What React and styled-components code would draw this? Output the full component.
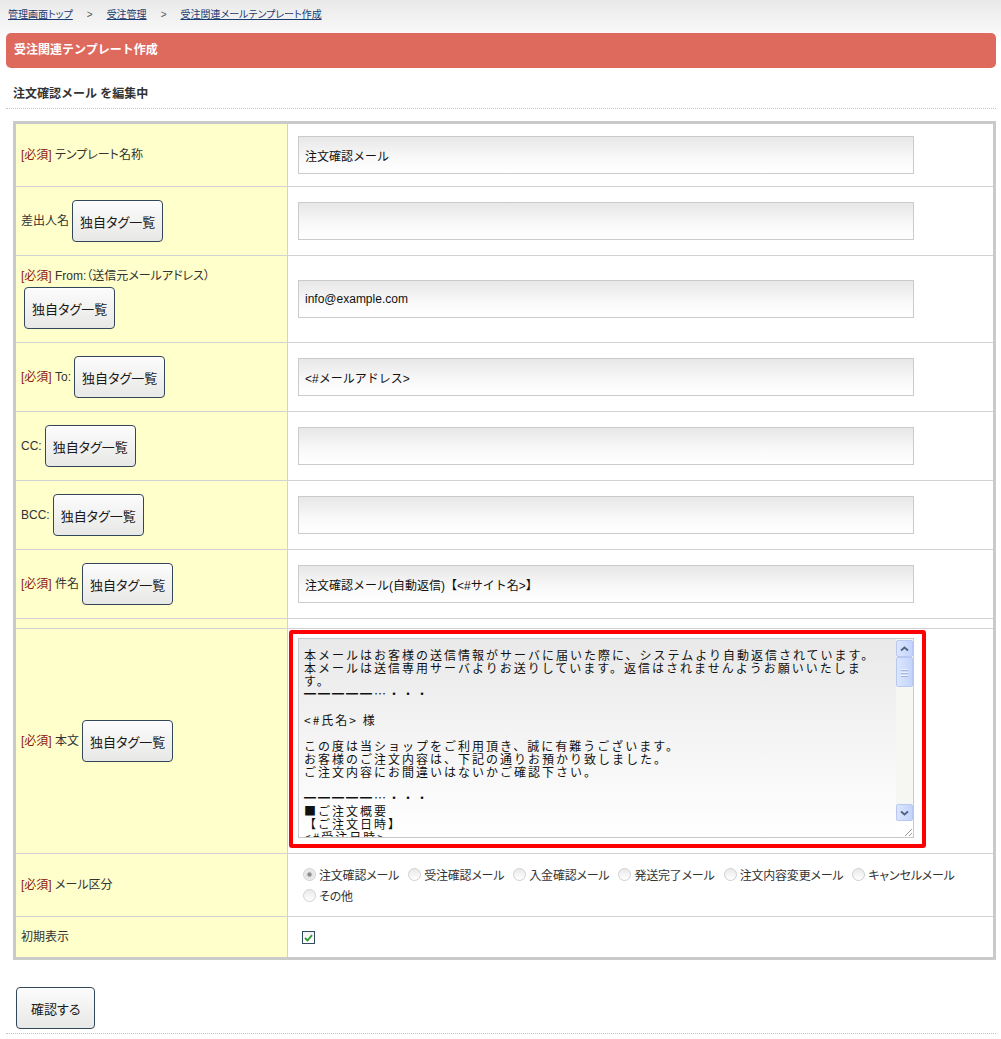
import React from "react";
import styled, { createGlobalStyle, css } from "styled-components";

const GlobalStyle = createGlobalStyle`
  html, body {
    margin: 0;
    padding: 0;
    background: #fff linear-gradient(#e9e9e9 0, #fff 46px) no-repeat;
    font-family: "Liberation Sans", "Noto Sans CJK JP", sans-serif;
    color: #333;
  }
`;

const Page = styled.div`
  width: 1001px;
  box-sizing: border-box;
  padding: 0 5px 0 6px;
`;

const Breadcrumb = styled.div`
  padding: 9px 2px 0;
  font-size: 10px;
  line-height: 12px;
  font-feature-settings: "palt" 1;
`;

const Crumb = styled.a`
  color: #1a3b70;
  text-decoration: underline;
`;

const Sep = styled.span`
  margin: 0 14px;
  color: #555;
`;

const TitleBar = styled.h1`
  margin: 12px 0 0;
  height: 35px;
  line-height: 35px;
  padding-left: 8px;
  background: #de6a5e;
  border-radius: 5px;
  color: #fff;
  font-size: 12px;
  font-weight: bold;
`;

const Subtitle = styled.h2`
  margin: 0;
  padding: 18px 7px 6px;
  font-size: 12px;
  line-height: 16px;
  font-weight: bold;
  color: #333;
  border-bottom: 1px dotted #c4c4c4;
`;

const FormTable = styled.table`
  margin: 12px 0 0 7px;
  width: calc(100% - 7px);
  table-layout: fixed;
  border-collapse: separate;
  border-spacing: 0;
  border: 3px solid #cacaca;
  font-size: 12px;

  tr:last-child > * {
    border-bottom: 0;
  }
`;

const LabelCell = styled.th`
  width: 272px;
  box-sizing: border-box;
  padding: ${(p) => (p.$spacer ? "0" : "12px 5px")};
  height: ${(p) => (p.$spacer ? "9px" : "auto")};
  background: #ffffcc;
  border-right: 1px solid #d2d2d2;
  border-bottom: 1px solid #d2d2d2;
  text-align: left;
  vertical-align: middle;
  font-weight: normal;
  font-size: 12px;
  line-height: 16px;
  color: #333;
  font-feature-settings: "palt" 1;
`;

const cellPads = {
  normal: "12px 10px",
  body: "1px 10px 5px 1px",
  radios: "10px 10px 10px",
  spacer: "0",
};

const ValueCell = styled.td`
  padding: ${(p) => cellPads[p.$variant || "normal"]};
  height: ${(p) => (p.$variant === "spacer" ? "9px" : "auto")};
  border-bottom: 1px solid #d2d2d2;
  vertical-align: middle;
  background: #fff;
  line-height: 16px;
`;

const LabelInner = styled.div`
  display: flex;
  align-items: ${(p) => (p.$stacked ? "flex-start" : "center")};
  flex-direction: ${(p) => (p.$stacked ? "column" : "row")};
  gap: ${(p) => (p.$stacked ? "2px" : "3px")};
`;

const LabelText = styled.span`
  white-space: nowrap;
`;

const Required = styled.span`
  color: #8e1a10;
`;

const buttonBase = css`
  height: 42px;
  box-sizing: border-box;
  border: 1px solid #33475a;
  border-radius: 4px;
  background: linear-gradient(#fcfcfc, #e8e8e6);
  box-shadow: inset 0 1px 0 #fff;
  font-family: "Noto Sans CJK JP", sans-serif;
  font-size: 13px;
  font-feature-settings: "palt" 1;
  color: #1a1a1a;
  cursor: pointer;
  flex-shrink: 0;
`;

const TagButton = styled.button`
  ${buttonBase};
  padding: 0 7px;
  margin: 1px 0 1px ${(p) => (p.$stacked ? "3px" : "0")};
`;

const SubmitButton = styled.button`
  ${buttonBase};
  padding: 0 14px;
`;

const TextInput = styled.input`
  display: block;
  width: 616px;
  height: 38px;
  box-sizing: border-box;
  padding: 0 6px;
  border: 1px solid #cbcbcb;
  background: linear-gradient(#e7e7e7 0%, #f9f9f9 60%, #fff 100%);
  font-family: "Liberation Sans", "Noto Sans CJK JP", sans-serif;
  font-size: 12px;
  color: #111;
  outline: none;
`;

const Highlight = styled.div`
  width: fit-content;
  border: 4px solid #f00;
  border-radius: 3px;
  padding: 4px 8px 6px 5px;
`;

const TextBox = styled.div`
  display: flex;
  width: 616px;
  height: 200px;
  box-sizing: border-box;
  border: 1px solid #c8c8c8;
  background: linear-gradient(#e9e9e9, #fff);
`;

const BodyText = styled.textarea`
  flex: 1;
  min-width: 0;
  height: 100%;
  box-sizing: border-box;
  margin: 0;
  padding: 9px 10px 0 5px;
  border: 0;
  background: transparent;
  resize: none;
  overflow: hidden;
  outline: none;
  font-family: "Noto Sans CJK JP", monospace;
  font-size: 12px;
  line-height: 13px;
  letter-spacing: 2px;
  color: #111;
`;

const ScrollBar = styled.div`
  width: 17px;
  display: flex;
  flex-direction: column;
  padding: 1px 0 0;
  background: #f6f6f2;
`;

const ScrollButton = styled.div`
  height: 17px;
  box-sizing: border-box;
  display: flex;
  align-items: center;
  justify-content: center;
  border: 1px solid #b7c8f2;
  border-radius: 2px;
  background: linear-gradient(90deg, #dce6fd, #c3d3fb);
`;

const ScrollThumb = styled(ScrollButton)`
  height: 30px;
  flex-direction: column;
  gap: 2px;
`;

const GripLine = styled.span`
  width: 7px;
  height: 1px;
  background: #eef3ff;
  box-shadow: 0 1px 0 #9fb4e6;
`;

const ScrollTrack = styled.div`
  flex: 1;
`;

const ResizeGrip = styled.div`
  height: 16px;
  background: #fff;
  display: flex;
  align-items: flex-end;
  justify-content: flex-end;
`;

const RadioGroup = styled.div`
  display: flex;
  flex-wrap: wrap;
`;

const RadioLabel = styled.label`
  display: inline-flex;
  align-items: center;
  height: 21px;
  margin-right: 4px;
  white-space: nowrap;
  font-family: "Noto Sans CJK JP", sans-serif;
  font-size: 12px;
  letter-spacing: -0.2px;
  color: #333;
  font-feature-settings: "palt" 1;
`;

const Radio = styled.input`
  appearance: none;
  flex-shrink: 0;
  width: 13px;
  height: 13px;
  margin: 0 3px 0 5px;
  border: 1px solid #d0d0d0;
  border-radius: 50%;
  background: linear-gradient(#e9e9e9, #fff);
  box-sizing: border-box;

  &:checked {
    background: radial-gradient(circle, #8c8c8c 0 1.6px, #e2e2e2 2.6px, #f8f8f8 100%);
  }
`;

const CheckBox = styled.span`
  display: inline-flex;
  align-items: center;
  justify-content: center;
  width: 13px;
  height: 13px;
  margin-left: 4px;
  box-sizing: border-box;
  border: 1px solid #2f4b5c;
  background: linear-gradient(#f2f2f2, #fff);
  vertical-align: middle;
`;

const Footer = styled.div`
  padding: 27px 0 4px 10px;
  border-bottom: 1px dotted #c4c4c4;
`;

const fields = [
  { required: true, label: "テンプレート名称", value: "注文確認メール" },
  { label: "差出人名", tag: true, value: "" },
  { required: true, label: "From:（送信元メールアドレス）", tag: true, stacked: true, value: "info@example.com" },
  { required: true, label: "To:", tag: true, value: "<#メールアドレス>" },
  { label: "CC:", tag: true, value: "" },
  { label: "BCC:", tag: true, value: "" },
  { required: true, label: "件名", tag: true, value: "注文確認メール(自動返信)【<#サイト名>】" },
];

const mailTypes = [
  "注文確認メール",
  "受注確認メール",
  "入金確認メール",
  "発送完了メール",
  "注文内容変更メール",
  "キャンセルメール",
  "その他",
];

const bodyText = `本メールはお客様の送信情報がサーバに届いた際に、システムより自動返信されています。
本メールは送信専用サーバよりお送りしています。返信はされませんようお願いいたします。
━━━━━…・・・

<#氏名> 様

この度は当ショップをご利用頂き、誠に有難うございます。
お客様のご注文内容は、下記の通りお預かり致しました。
ご注文内容にお間違いはないかご確認下さい。

━━━━━…・・・
■ご注文概要
【ご注文日時】
<#受注日時>
【ご注文番号】
<#受注番号>
`;

function Label({ required, text, tag, stacked }) {
  return (
    <LabelInner $stacked={stacked}>
      <LabelText>
        {required && <Required>[必須]</Required>} {text}
      </LabelText>
      {tag && (
        <TagButton type="button" $stacked={stacked}>
          独自タグ一覧
        </TagButton>
      )}
    </LabelInner>
  );
}

function Arrow({ down }) {
  return (
    <svg width="9" height="6" viewBox="0 0 9 6">
      <path
        d={down ? "M1 1.5 L4.5 4.5 L8 1.5" : "M1 4.5 L4.5 1.5 L8 4.5"}
        fill="none"
        stroke="#4d6185"
        strokeWidth="1.8"
      />
    </svg>
  );
}

export default function App() {
  return (
    <Page>
      <GlobalStyle />
      <Breadcrumb>
        <Crumb href="#">管理画面トップ</Crumb>
        <Sep>&gt;</Sep>
        <Crumb href="#">受注管理</Crumb>
        <Sep>&gt;</Sep>
        <Crumb href="#">受注関連メールテンプレート作成</Crumb>
      </Breadcrumb>
      <TitleBar>受注関連テンプレート作成</TitleBar>
      <Subtitle>注文確認メール を編集中</Subtitle>

      <FormTable>
        <tbody>
          {fields.map((f) => (
            <tr key={f.label}>
              <LabelCell>
                <Label required={f.required} text={f.label} tag={f.tag} stacked={f.stacked} />
              </LabelCell>
              <ValueCell>
                <TextInput defaultValue={f.value} />
              </ValueCell>
            </tr>
          ))}
          <tr>
            <LabelCell $spacer />
            <ValueCell $variant="spacer" />
          </tr>
          <tr>
            <LabelCell>
              <Label required text="本文" tag />
            </LabelCell>
            <ValueCell $variant="body">
              <Highlight>
                <TextBox>
                  <BodyText defaultValue={bodyText} spellCheck={false} />
                  <ScrollBar>
                    <ScrollButton>
                      <Arrow />
                    </ScrollButton>
                    <ScrollThumb>
                      <GripLine />
                      <GripLine />
                      <GripLine />
                    </ScrollThumb>
                    <ScrollTrack />
                    <ScrollButton>
                      <Arrow down />
                    </ScrollButton>
                    <ResizeGrip>
                      <svg width="12" height="12" viewBox="0 0 12 12">
                        <path d="M11 4 L4 11 M11 8 L8 11" stroke="#9a9a9a" strokeWidth="1" />
                      </svg>
                    </ResizeGrip>
                  </ScrollBar>
                </TextBox>
              </Highlight>
            </ValueCell>
          </tr>
          <tr>
            <LabelCell>
              <Label required text="メール区分" />
            </LabelCell>
            <ValueCell $variant="radios">
              <RadioGroup>
                {mailTypes.map((m, i) => (
                  <RadioLabel key={m}>
                    <Radio type="radio" name="mailType" defaultChecked={i === 0} />
                    {m}
                  </RadioLabel>
                ))}
              </RadioGroup>
            </ValueCell>
          </tr>
          <tr>
            <LabelCell>
              <Label text="初期表示" />
            </LabelCell>
            <ValueCell>
              <CheckBox>
                <svg width="9" height="8" viewBox="0 0 9 8">
                  <path d="M1 4 L3.5 6.5 L8 1.2" fill="none" stroke="#2e9a2e" strokeWidth="1.8" />
                </svg>
              </CheckBox>
            </ValueCell>
          </tr>
        </tbody>
      </FormTable>

      <Footer>
        <SubmitButton type="button">確認する</SubmitButton>
      </Footer>
    </Page>
  );
}
